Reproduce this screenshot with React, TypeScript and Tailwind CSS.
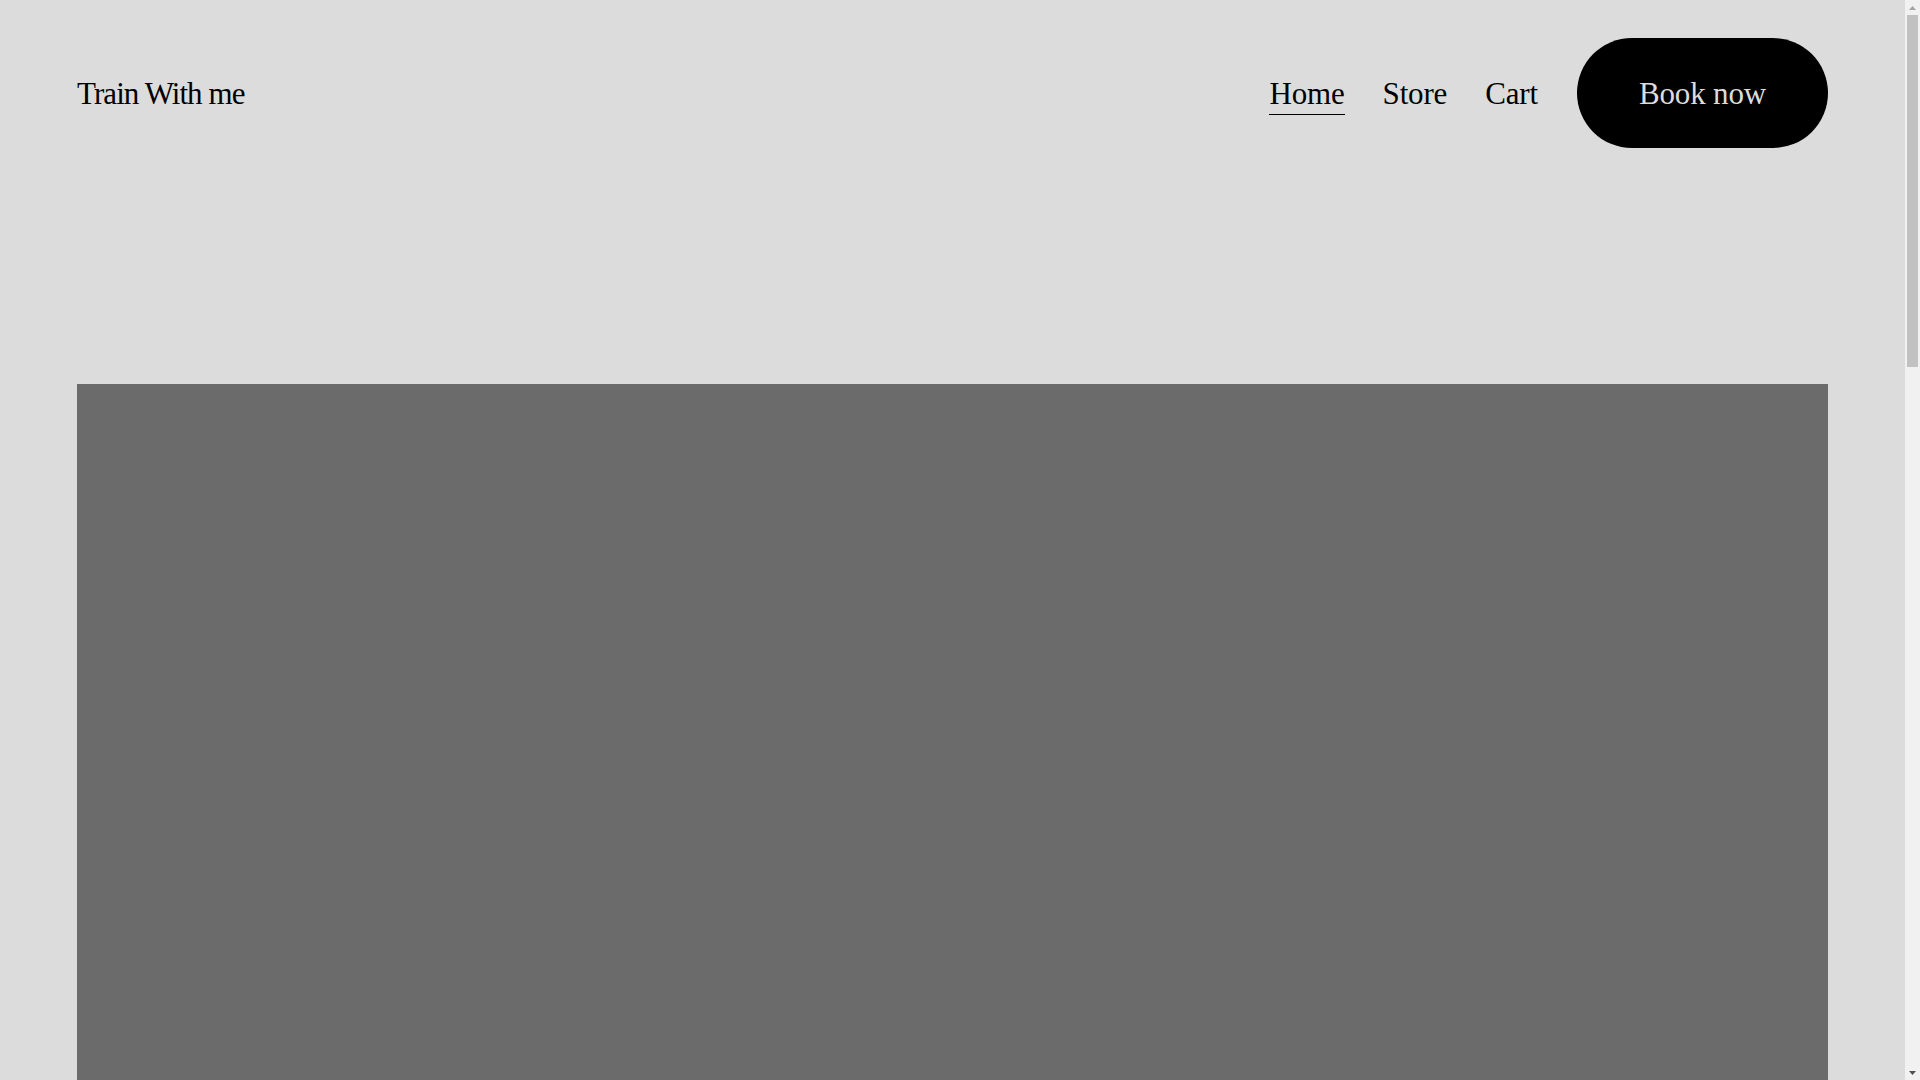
import React from 'react';

const navItems = [
  { name: 'Home', href: '#', active: true },
  { name: 'Store', href: '#', active: false },
  { name: 'Cart', href: '#', active: false },
];

function Header() {
  return (
    <header className="flex items-center justify-between px-[77px] pt-[38px]">
      <a href="#" className="text-[31px] leading-none tracking-[-0.03em] text-black">
        Train With me
      </a>
      <div className="flex items-center">
        <nav className="flex items-center gap-[38px] mr-[39px]">
          {navItems.map((item) => (
            <a
              key={item.name}
              href={item.href}
              className="relative text-[31px] leading-none tracking-[-0.005em] text-black"
            >
              {item.name}
              {item.active && (
                <span className="absolute left-0 right-0 top-[36px] h-[1.5px] bg-black" />
              )}
            </a>
          ))}
        </nav>
        <a
          href="#"
          className="flex items-center justify-center h-[110px] w-[251px] rounded-full bg-black text-[31px] leading-none tracking-[-0.005em] text-[#dcdcdc]"
        >
          Book now
        </a>
      </div>
    </header>
  );
}

// classic window scrollbar, as the page shows it
function Scrollbar() {
  return (
    <aside className="flex h-screen w-[15px] shrink-0 flex-col items-center bg-[#f1f1f1]">
      <div className="flex h-[15px] w-full items-center justify-center">
        <svg width="7" height="4" viewBox="0 0 7 4">
          <path d="M3.5 0L7 4H0z" fill="#a3a3a3" />
        </svg>
      </div>
      <div className="h-[352px] w-[11px] bg-[#c1c1c1]" />
      <div className="flex-1" />
      <div className="flex h-[15px] w-full items-center justify-center">
        <svg width="7" height="4" viewBox="0 0 7 4">
          <path d="M0 0H7L3.5 4z" fill="#505050" />
        </svg>
      </div>
    </aside>
  );
}

export default function App() {
  return (
    <div className="flex h-screen w-full overflow-hidden bg-[#dcdcdc] font-['Liberation_Serif','Times_New_Roman',serif]">
      <div className="flex-1 overflow-y-auto [scrollbar-width:none]">
        <Header />
        <main className="px-[77px] pt-[236px] pb-[160px]">
          <section className="h-[1300px] w-full bg-[#6b6b6b]" />
        </main>
        <section className="h-[1400px]" />
      </div>
      <Scrollbar />
    </div>
  );
}
